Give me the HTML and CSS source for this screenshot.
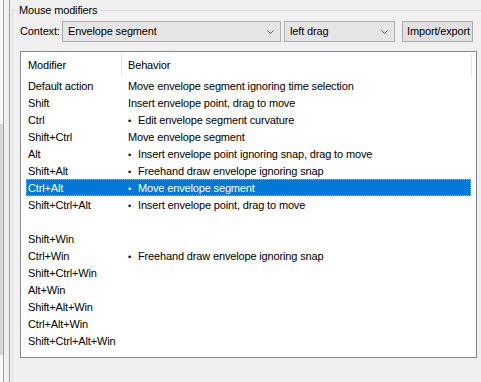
FILE: index.html
```html
<!DOCTYPE html>
<html>
<head>
<meta charset="utf-8">
<link rel="stylesheet" href="styles.css">
</head>
<body>
<div class="app">
  <div class="edge">
    <div class="track"><div class="thumb"></div></div>
    <div class="pane"></div>
  </div>
  <fieldset class="group">
    <legend class="legend">Mouse modifiers</legend>
    <div class="ctx-row">
      <span class="ctx-label">Context:</span>
      <div class="combo combo-ctx"><span class="combo-text">Envelope segment</span><svg class="chev" width="7" height="4" viewBox="0 0 7 4"><polyline points="0.5,0.5 3.5,3.5 6.5,0.5" fill="none" stroke="#5a5a5a" stroke-width="1"/></svg></div>
      <div class="combo combo-act"><span class="combo-text">left drag</span><svg class="chev" width="7" height="4" viewBox="0 0 7 4"><polyline points="0.5,0.5 3.5,3.5 6.5,0.5" fill="none" stroke="#5a5a5a" stroke-width="1"/></svg></div>
      <button class="btn">Import/export</button>
    </div>
    <div class="list">
      <div class="list-head">
        <div class="h1">Modifier</div>
        <div class="h2">Behavior</div>
      </div>
      <div class="rows">
        <div class="row"><div class="c1">Default action</div><div class="c2">Move envelope segment ignoring time selection</div></div>
        <div class="row"><div class="c1">Shift</div><div class="c2">Insert envelope point, drag to move</div></div>
        <div class="row"><div class="c1">Ctrl</div><div class="c2"><span class="b">•</span>Edit envelope segment curvature</div></div>
        <div class="row"><div class="c1">Shift+Ctrl</div><div class="c2">Move envelope segment</div></div>
        <div class="row"><div class="c1">Alt</div><div class="c2"><span class="b">•</span>Insert envelope point ignoring snap, drag to move</div></div>
        <div class="row"><div class="c1">Shift+Alt</div><div class="c2"><span class="b">•</span>Freehand draw envelope ignoring snap</div></div>
        <div class="row sel"><div class="c1">Ctrl+Alt</div><div class="c2"><span class="b">•</span>Move envelope segment</div></div>
        <div class="row"><div class="c1">Shift+Ctrl+Alt</div><div class="c2"><span class="b">•</span>Insert envelope point, drag to move</div></div>
        <div class="row"><div class="c1"></div><div class="c2"></div></div>
        <div class="row"><div class="c1">Shift+Win</div><div class="c2"></div></div>
        <div class="row"><div class="c1">Ctrl+Win</div><div class="c2"><span class="b">•</span>Freehand draw envelope ignoring snap</div></div>
        <div class="row"><div class="c1">Shift+Ctrl+Win</div><div class="c2"></div></div>
        <div class="row"><div class="c1">Alt+Win</div><div class="c2"></div></div>
        <div class="row"><div class="c1">Shift+Alt+Win</div><div class="c2"></div></div>
        <div class="row"><div class="c1">Ctrl+Alt+Win</div><div class="c2"></div></div>
        <div class="row"><div class="c1">Shift+Ctrl+Alt+Win</div><div class="c2"></div></div>
      </div>
    </div>
  </fieldset>
</div>
</body>
</html>
```

FILE: styles.css
```css
html, body {
  margin: 0;
  padding: 0;
  background: #f0f0f0;
  overflow: hidden;
}
body {
  width: 481px;
  height: 382px;
  font-family: "Liberation Sans", Arial, sans-serif;
  font-size: 11px;
  line-height: 13px;
  letter-spacing: -0.15px;
  color: #000;
}
.app {
  display: flex;
  width: 481px;
  height: 382px;
  overflow: hidden;
}
.edge {
  display: flex;
  width: 12px;
  flex: none;
}
.track {
  width: 3px;
  background: #f7f7f7;
  display: flex;
  flex-direction: column;
}
.thumb {
  margin-top: 124px;
  height: 231px;
  background: #d6d6d6;
}
.pane {
  width: 5px;
  border-left: 1px solid #a0a0a0;
  border-right: 1px solid #a0a0a0;
}
.group {
  margin: 4px 0 0 0;
  padding: 0 0 0 7px;
  border: 1px solid #dcdcdc;
  border-right: none;
  border-bottom: none;
  flex: 1;
  height: 378px;
  box-sizing: border-box;
  min-width: 0;
}
.legend {
  margin-left: -3px;
  padding: 0 2px;
  line-height: 13px;
}
.ctx-row {
  display: flex;
  align-items: center;
  height: 21px;
  margin-top: 4px;
}
.ctx-label {
  width: 42px;
  flex: none;
}
.combo {
  box-sizing: border-box;
  height: 21px;
  background: #e5e5e5;
  border: 1px solid #adadad;
  display: flex;
  align-items: center;
  justify-content: space-between;
  padding: 0 6px 0 5px;
  flex: none;
}
.combo-ctx {
  width: 219px;
  margin-right: 3px;
}
.combo-act {
  width: 111px;
  margin-right: 7px;
}
.chev {
  display: block;
  margin-top: 1px;
}
.btn {
  box-sizing: border-box;
  width: 71px;
  height: 21px;
  background: #e1e1e1;
  border: 1px solid #adadad;
  font: inherit;
  letter-spacing: -0.15px;
  color: #000;
  padding: 0 0 0 2px;
  flex: none;
}
.list {
  box-sizing: border-box;
  margin-top: 9px;
  width: 457px;
  height: 307px;
  border: 1px solid #828790;
  background: #fff;
}
.list-head {
  display: flex;
  height: 25px;
  align-items: stretch;
}
.h1 {
  box-sizing: border-box;
  width: 101px;
  padding: 1px 0 0 7px;
  border-right: 1px solid #e5e5e5;
  display: flex;
  align-items: center;
}
.h2 {
  box-sizing: border-box;
  width: 350px;
  padding-left: 6px;
  border-right: 1px solid #e5e5e5;
  display: flex;
  align-items: center;
  margin-top: 2px;
}
.rows {
  margin-left: 5px;
  width: 445px;
}
.row {
  display: grid;
  grid-template-columns: 96px 1fr;
  height: 17px;
  align-items: start;
}
.c1 {
  padding: 3px 0 0 2px;
  white-space: nowrap;
}
.c2 {
  padding: 3px 0 0 6px;
  white-space: nowrap;
}
.b {
  display: inline-block;
  width: 10px;
  font-size: 9px;
}
.sel {
  background: #0078d7;
  color: #fff;
  outline: 1px dotted #e8a860;
  outline-offset: -1px;
}
```
